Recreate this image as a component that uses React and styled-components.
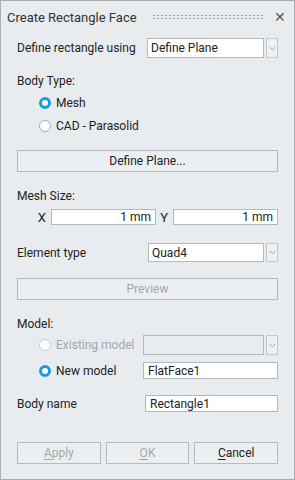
import React from 'react'
import styled, { createGlobalStyle } from 'styled-components'

const Global = createGlobalStyle`
  html, body { margin: 0; padding: 0; background: #e8ecef; }
  * { box-sizing: border-box; }
`

const Panel = styled.div`
  width: 295px;
  height: 480px;
  background: #e8ecef;
  border: 1px solid #a9aeb3;
  font-family: Roboto, 'Liberation Sans', Arial, sans-serif;
  font-size: 12px;
  color: #222;
  display: flex;
  flex-direction: column;
`

const TitleBar = styled.div`
  display: flex;
  align-items: center;
  height: 32px;
  padding: 0 8px 0 6px;
  font-size: 13px;
  color: #333;
`

const Title = styled.div`
  flex: none;
`

const Grip = styled.div`
  flex: 1;
  margin: 0 10px 0 15px;
  height: 6px;
  background-image: radial-gradient(circle, #9aa0a6 0.7px, transparent 0.9px);
  background-size: 4px 3px;
`

const Close = styled.div`
  font-size: 14px;
  color: #555;
  line-height: 1;
`

const Body = styled.div`
  flex: 1;
  display: flex;
  flex-direction: column;
  padding: 5px 16px 0 16px;
`

const Row = styled.div`
  display: flex;
  align-items: center;
  height: ${p => p.h || 20}px;
  margin-top: ${p => p.mt || 0}px;
  padding-left: ${p => p.indent || 0}px;
`

const Label = styled.div`
  width: ${p => p.w}px;
  flex: none;
  display: flex;
  align-items: center;
  color: ${p => (p.disabled ? '#a3a7ab' : '#222')};
`

const Heading = styled.div`
  margin-top: ${p => p.mt || 0}px;
  height: 16px;
  line-height: 16px;
`

const Combo = styled.div`
  flex: 1;
  display: flex;
  height: 100%;
  gap: 2px;
`

const ComboField = styled.div`
  flex: 1;
  background: ${p => (p.disabled ? '#e8ecef' : '#fff')};
  border: 1px solid #b3b8bd;
  padding: 0 3px;
  display: flex;
  align-items: center;
`

const ComboArrow = styled.div`
  width: 12px;
  border: 1px solid #c3c7cb;
  background: #eef1f3;
  display: flex;
  align-items: center;
  justify-content: center;
`

const Input = styled.div`
  flex: 1;
  height: 100%;
  background: #fff;
  border: 1px solid #b3b8bd;
  padding: 0 4px;
  display: flex;
  align-items: center;
  justify-content: ${p => (p.align === 'right' ? 'flex-end' : 'flex-start')};
`

const Button = styled.div`
  flex: 1;
  height: 100%;
  border: 1px solid #b6bbc0;
  background: #eceff1;
  display: flex;
  align-items: center;
  justify-content: center;
  color: ${p => (p.disabled ? '#a3a7ab' : '#222')};
  u { text-decoration: underline; text-underline-offset: 2px; }
`

const ButtonRow = styled.div`
  display: flex;
  gap: 5px;
  height: 22px;
  margin-top: ${p => p.mt}px;
`

const RadioCircle = styled.span`
  width: 12px;
  height: 12px;
  border-radius: 50%;
  flex: none;
  margin-right: 5px;
  background: #fff;
  border: ${p => (p.checked ? '3.5px solid #1a9be0' : `1px solid ${p.disabled ? '#c8ccd0' : '#a8adb2'}`)};
`

const Radio = ({ checked, disabled, children, w }) => (
  <Label w={w} disabled={disabled}>
    <RadioCircle checked={checked} disabled={disabled} />
    {children}
  </Label>
)

const Arrow = () => (
  <svg width="7" height="5" viewBox="0 0 7 5">
    <path d="M1 1.2 L3.5 3.6 L6 1.2" fill="none" stroke="#9aa0a6" strokeWidth="1" />
  </svg>
)

const Select = ({ value, disabled }) => (
  <Combo>
    <ComboField disabled={disabled}>{value}</ComboField>
    <ComboArrow>
      <Arrow />
    </ComboArrow>
  </Combo>
)

const AxisLabel = styled.span`
  width: ${p => p.w}px;
  flex: none;
  text-align: right;
  padding-right: 5px;
  font-size: 13px;
`

export default function App() {
  return (
    <Panel>
      <Global />
      <TitleBar>
        <Title>Create Rectangle Face</Title>
        <Grip />
        <Close>✕</Close>
      </TitleBar>
      <Body>
        <Row mt={0}>
          <Label w={130}>Define rectangle using</Label>
          <Select value="Define Plane" />
        </Row>
        <Heading mt={15}>Body Type:</Heading>
        <Row mt={4} indent={22}>
          <Radio checked>Mesh</Radio>
        </Row>
        <Row mt={3} indent={22}>
          <Radio>CAD - Parasolid</Radio>
        </Row>
        <Row mt={14} h={22}>
          <Button>Define Plane...</Button>
        </Row>
        <Heading mt={16}>Mesh Size:</Heading>
        <Row mt={5} h={16}>
          <AxisLabel w={34}>X</AxisLabel>
          <Input align="right">1 mm</Input>
          <AxisLabel w={17}>Y</AxisLabel>
          <Input align="right">1 mm</Input>
        </Row>
        <Row mt={18} h={19}>
          <Label w={131}>Element type</Label>
          <Select value="Quad4" />
        </Row>
        <Row mt={16} h={22}>
          <Button disabled>Preview</Button>
        </Row>
        <Heading mt={16}>Model:</Heading>
        <Row mt={3} indent={22}>
          <Radio w={104} disabled>Existing model</Radio>
          <Select value="" disabled />
        </Row>
        <Row mt={7} h={17} indent={22}>
          <Radio w={104} checked>New model</Radio>
          <Input>FlatFace1</Input>
        </Row>
        <Row mt={16} h={17}>
          <Label w={128}>Body name</Label>
          <Input>Rectangle1</Input>
        </Row>
        <ButtonRow mt={30}>
          <Button disabled><span><u>A</u>pply</span></Button>
          <Button disabled><span><u>O</u>K</span></Button>
          <Button><span><u>C</u>ancel</span></Button>
        </ButtonRow>
      </Body>
    </Panel>
  )
}
